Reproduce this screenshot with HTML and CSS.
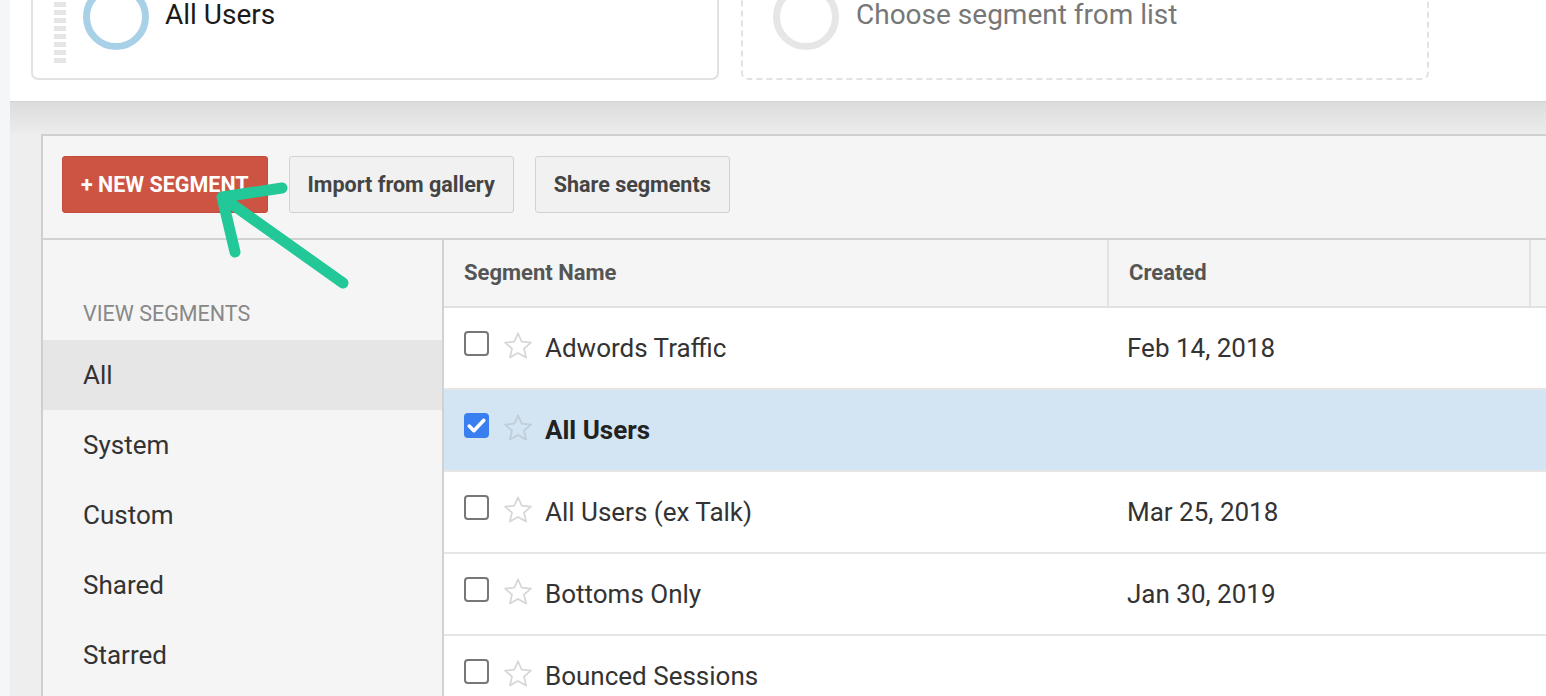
FILE: index.html
```html
<!DOCTYPE html>
<html lang="en">
<head>
    <meta charset="UTF-8">
    <title>Segments</title>
    <link rel="stylesheet" href="styles.css">
</head>
<body>
    <div class="page">
        <div class="top">
            <div class="seg_card">
                <div class="handle"></div>
                <div class="ring"></div>
                <div class="seg_name">All Users</div>
            </div>
            <div class="seg_card empty">
                <div class="ring"></div>
                <div class="seg_name">Choose segment from list</div>
            </div>
        </div>
        <div class="band"></div>
        <div class="panel">
            <div class="toolbar">
                <div class="btn btn_red">+ NEW SEGMENT</div>
                <div class="btn">Import from gallery</div>
                <div class="btn">Share segments</div>
            </div>
            <div class="main">
                <div class="side">
                    <div class="side_title">VIEW SEGMENTS</div>
                    <ul>
                        <li class="active">All</li>
                        <li>System</li>
                        <li>Custom</li>
                        <li>Shared</li>
                        <li>Starred</li>
                    </ul>
                </div>
                <div class="table">
                    <div class="row head">
                        <div class="c_name">Segment Name</div>
                        <div class="c_date">Created</div>
                        <div class="c_more"></div>
                    </div>
                    <div class="row">
                        <div class="c_name"><span class="check"></span><svg class="star" viewBox="0 0 24 24"><path d="M12 2.5l2.8 6.3 6.9.6-5.2 4.6 1.6 6.7L12 17.2l-6.1 3.5 1.6-6.7-5.2-4.6 6.9-.6z"/></svg>Adwords Traffic</div>
                        <div class="c_date">Feb 14, 2018</div>
                        <div class="c_more"></div>
                    </div>
                    <div class="row selected">
                        <div class="c_name"><span class="check on"><svg viewBox="0 0 24 24"><path d="M5 12.5l4.5 4.5L19 7"/></svg></span><svg class="star" viewBox="0 0 24 24"><path d="M12 2.5l2.8 6.3 6.9.6-5.2 4.6 1.6 6.7L12 17.2l-6.1 3.5 1.6-6.7-5.2-4.6 6.9-.6z"/></svg><b>All Users</b></div>
                        <div class="c_date"></div>
                        <div class="c_more"></div>
                    </div>
                    <div class="row">
                        <div class="c_name"><span class="check"></span><svg class="star" viewBox="0 0 24 24"><path d="M12 2.5l2.8 6.3 6.9.6-5.2 4.6 1.6 6.7L12 17.2l-6.1 3.5 1.6-6.7-5.2-4.6 6.9-.6z"/></svg>All Users (ex Talk)</div>
                        <div class="c_date">Mar 25, 2018</div>
                        <div class="c_more"></div>
                    </div>
                    <div class="row">
                        <div class="c_name"><span class="check"></span><svg class="star" viewBox="0 0 24 24"><path d="M12 2.5l2.8 6.3 6.9.6-5.2 4.6 1.6 6.7L12 17.2l-6.1 3.5 1.6-6.7-5.2-4.6 6.9-.6z"/></svg>Bottoms Only</div>
                        <div class="c_date">Jan 30, 2019</div>
                        <div class="c_more"></div>
                    </div>
                    <div class="row">
                        <div class="c_name"><span class="check"></span><svg class="star" viewBox="0 0 24 24"><path d="M12 2.5l2.8 6.3 6.9.6-5.2 4.6 1.6 6.7L12 17.2l-6.1 3.5 1.6-6.7-5.2-4.6 6.9-.6z"/></svg>Bounced Sessions</div>
                        <div class="c_date"></div>
                        <div class="c_more"></div>
                    </div>
                </div>
            </div>
        </div>
    </div>
    <!-- annotation arrow -->
    <svg class="arrow" width="1546" height="696" viewBox="0 0 1546 696">
        <path d="M343 283L222 197M222 197L282 188M222 197L235 252"/>
    </svg>
</body>
</html>
```

FILE: styles.css
```css
*{
    margin:0;padding:0;
    box-sizing:border-box;
}
html,body{
    width:100%;
    height:100%;
    overflow:hidden;
    background-color:#f5f6f8;
    font-family:Roboto,"Liberation Sans",sans-serif;
    color:#333;
}
ul,li{
    list-style:none;
}
.page{
    margin-left:10px;
    height:100%;
    background-color:#eee;
}
/* top segment bar */
.top{
    display:flex;
    gap:22px;
    height:102px;
    padding:0 0 0 21px;
    background-color:#fff;
    border-bottom:1px solid #d4d4d4;
    overflow:hidden;
}
.seg_card{
    position:relative;
    display:flex;
    align-items:flex-start;
    width:688px;
    height:122px;
    margin-top:-42px;
    padding:24px 0 0 21px;
    border:2px solid #e2e2e2;
    border-radius:7px;
    background-color:#fff;
    flex:none;
}
.seg_card.empty{
    border:2px dashed #e2e2e2;
    padding-left:30px;
}
.handle{
    width:12px;
    height:104px;
    margin-top:-22px;
    background:repeating-linear-gradient(#e6e6e6 0 5px,transparent 5px 8px);
}
.ring{
    width:66px;
    height:66px;
    margin-left:17px;
    border:7px solid #a8d1e8;
    border-radius:50%;
}
.empty .ring{
    margin-left:0;
    border-color:#e6e6e6;
}
.seg_name{
    margin:14px 0 0 16px;
    font-size:28px;
    color:#1a1a1a;
}
.empty .seg_name{
    margin-left:17px;
    color:#777;
}
.band{
    height:32px;
    background:linear-gradient(#dcdcdc,#ececec);
}
/* segment panel */
.panel{
    margin-left:31px;
    border-top:2px solid #d0d0d0;
    border-left:2px solid #cfcfcf;
    background-color:#f5f5f5;
    height:600px;
}
.toolbar{
    display:flex;
    gap:21px;
    height:104px;
    padding:20px 19px;
    border-bottom:2px solid #d2d2d2;
}
.btn{
    height:57px;
    line-height:55px;
    padding:0 18px;
    font-size:21.5px;
    font-weight:bold;
    color:#444;
    background-color:#f1f1f1;
    border:1px solid #d2d2d2;
    border-radius:3px;
}
.btn_red{
    color:#fff;
    background-color:#cd5442;
    border-color:#c24b3a;
}
.main{
    display:flex;
}
.side{
    width:401px;
    flex:none;
    border-right:2px solid #d2d2d2;
    height:470px;
}
.side_title{
    padding:61px 0 0 40px;
    height:100px;
    font-size:21.5px;
    color:#888;
}
.side li{
    height:70px;
    line-height:70px;
    padding-left:40px;
    font-size:26px;
    color:#333;
}
.side li.active{
    background-color:#e6e6e6;
}
.table{
    flex:1;
}
.row{
    display:flex;
    height:82px;
    border-bottom:2px solid #e6e6e6;
    background-color:#fff;
    font-size:26px;
    color:#333;
}
.row.selected{
    background-color:#d3e5f3;
}
.row.head{
    height:68px;
    background-color:#f5f5f5;
    border-bottom-color:#e2e2e2;
    font-size:22px;
    font-weight:bold;
    color:#555;
}
.c_name{
    display:flex;
    align-items:center;
    width:663px;
    padding-left:20px;
}
.c_date{
    display:flex;
    align-items:center;
    width:422px;
    padding-left:20px;
}
.head .c_date,.head .c_more{
    border-left:2px solid #e2e2e2;
}
.head .c_name,.head .c_date{
    padding-bottom:2px;
}
.c_more{
    flex:1;
}
.check{
    display:block;
    width:25px;
    height:25px;
    margin:-10px 13px 0 0;
    border:2px solid #777;
    border-radius:4px;
    background-color:#fff;
}
.check.on{
    border:none;
    background-color:#3a7ff0;
}
.check svg{
    display:block;
    width:25px;
    height:25px;
    fill:none;
    stroke:#fff;
    stroke-width:3.4;
    stroke-linecap:round;
    stroke-linejoin:round;
}
.star{
    width:32px;
    height:32px;
    margin:-4px 11px 0 0;
    fill:none;
    stroke:#d6d6d6;
    stroke-width:1.3;
    stroke-linejoin:round;
}
.selected .star{
    stroke:#bfcdd8;
}
.row b{
    color:#222;
}
.arrow{
    position:absolute;
    left:0;
    top:0;
    pointer-events:none;
    fill:none;
    stroke:#22c898;
    stroke-width:11;
    stroke-linecap:round;
    stroke-linejoin:round;
}
```
